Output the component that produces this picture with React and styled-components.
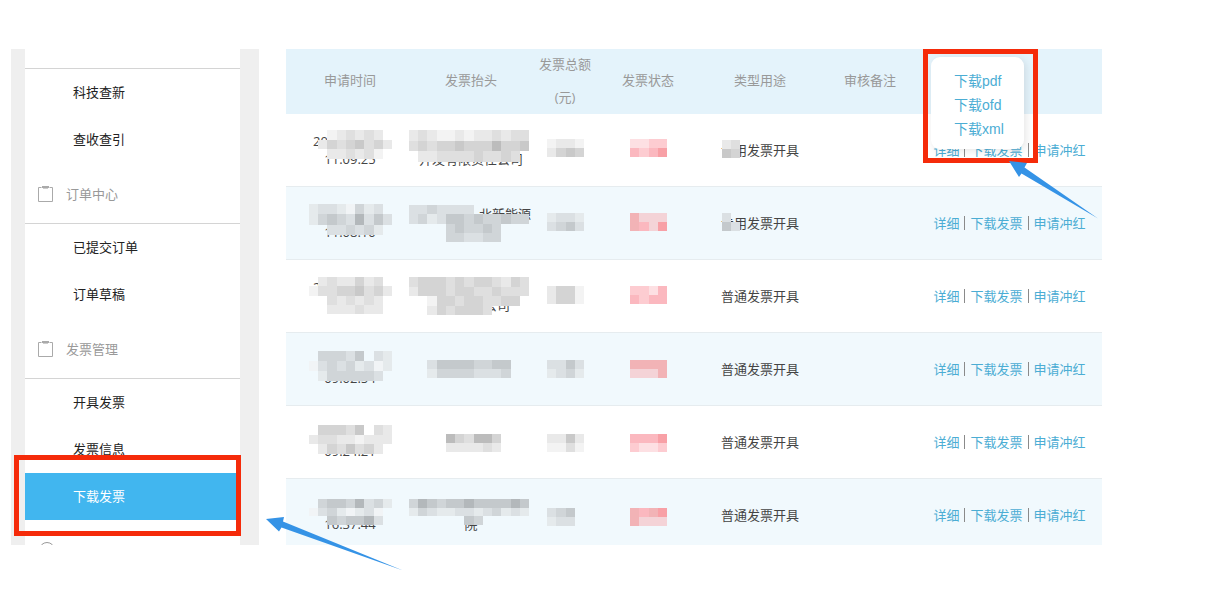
import React from 'react'
import styled, { createGlobalStyle } from 'styled-components'

const GlobalStyle = createGlobalStyle`
  body {
    margin: 0;
    background: #fff;
    font-family: "Open Sans", "Noto Sans CJK SC", sans-serif;
    font-size: 13px;
    color: #444;
  }
  * {
    box-sizing: border-box;
  }
`

const Page = styled.div`
  height: 100vh;
  padding: 49px 103px 44px 11px;
`

const Screen = styled.div`
  position: relative;
  display: flex;
  gap: 27px;
  height: 100%;
`

const Sidebar = styled.nav`
  flex: none;
  width: 248px;
  padding: 0 19px 0 14px;
  background: #efefef;
  overflow: hidden;
`

const Menu = styled.div`
  min-height: 100%;
  background: #fff;
`

const MenuEdge = styled.div`
  height: 20px;
  border-bottom: 1px solid #d4d4d4;
`

const Group = styled.h3`
  display: flex;
  align-items: center;
  gap: 12px;
  height: 61px;
  margin: 0;
  padding-left: 13px;
  border-bottom: 1px solid #d4d4d4;
  font-size: 13px;
  font-weight: normal;
  color: #999;
`

const MenuItem = styled.a`
  display: block;
  height: 47px;
  margin-right: 3px;
  padding-left: 48px;
  line-height: 46px;
  color: ${p => p.$active ? '#fff' : '#222'};
  background: ${p => p.$active ? '#41b6ef' : 'none'};
  text-decoration: none;
`

const Content = styled.main`
  flex: 1;
  min-width: 0;
  overflow: hidden;
`

const Table = styled.table`
  width: 100%;
  margin-top: -2px;
  table-layout: fixed;
  border-collapse: separate;
  border-spacing: 0;
`

const Th = styled.th`
  width: ${p => p.$width}px;
  height: 67px;
  padding: 0;
  background: #e4f3fb;
  font-weight: normal;
  line-height: 33px;
  color: #999;
`

const Row = styled.tr`
  background: ${p => p.$tinted ? '#f1f9fd' : '#fff'};
`

const Td = styled.td`
  position: relative;
  height: 73px;
  padding: 0;
  border-bottom: 1px solid #e6ecef;
  line-height: 18px;
  text-align: center;
  white-space: pre;
`

const Line = styled.div`
  width: ${p => p.$date ? '74px' : 'auto'};
  height: 18px;
  margin: 0 auto;
  text-align: ${p => p.$date ? 'left' : 'center'};
`

const MosaicSvg = styled.svg`
  position: absolute;
  top: ${p => p.$top}px;
  left: calc(50% - ${p => p.$shift}px);
`

const Actions = styled.div`
  display: flex;
  align-items: center;
  justify-content: center;
  padding-left: 3px;
`

const Action = styled.a`
  color: #4badd4;
  text-decoration: none;
`

const Divider = styled.span`
  width: 1px;
  height: 14px;
  margin: 0 5px;
  background: #8a8a8a;
`

const Popup = styled.div`
  position: absolute;
  top: -57px;
  left: 17px;
  width: 93px;
  height: 92px;
  padding: 12px 0 0 23px;
  border-radius: 9px;
  background: #fff;
  box-shadow: 2px 2px 8px rgba(0, 0, 0, 0.1);
  font-family: "Liberation Sans", "Noto Sans CJK SC", sans-serif;
  font-size: 14px;
  line-height: 24px;
  text-align: left;
`

const PopupLink = styled(Action)`
  display: block;
`

const Frame = styled.div`
  position: absolute;
  border: 5px solid #f52b0a;
`

const MenuFrame = styled(Frame)`
  top: 406px;
  left: 3px;
  width: 227px;
  height: 81px;
`

const PopupFrame = styled(Frame)`
  top: -65px;
  left: 9px;
  width: 115px;
  height: 114px;
`

const MenuArrow = styled.svg`
  position: absolute;
  top: 468px;
  left: 255px;
`

const PopupArrow = styled.svg`
  position: absolute;
  z-index: 1;
  top: 47px;
  left: 95px;
`

const greys = {
  a: '#f3f3f3', b: '#e9e9e9', c: '#dfdfdf', d: '#d4d4d4', e: '#c9c9c9', f: '#bcbcbc',
  n: '#f1f4f6', o: '#e5eaec', p: '#dbe0e3', q: '#d0d5d8', r: '#c4c9cc', s: '#b3b8bb',
  u: '#fde0e3', v: '#fdccd1', w: '#fbb8bf', x: '#f8a0a6', y: '#f2b3b6', z: '#f4d3d7'
}

// one letter per square, a dot leaves it empty
const Mosaic = ({ cells, top, shift, height }) => {
  const cols = cells[0].length
  const width = Math.round(cols * 9.2)
  return <MosaicSvg
    width={width}
    height={height || Math.round(cells.length * 9.2)}
    viewBox={`0 0 ${cols} ${cells.length}`}
    preserveAspectRatio='none'
    shapeRendering='crispEdges'
    $top={top}
    $shift={shift || Math.floor(width / 2)}
    aria-hidden='true'
  >
    {cells.map((line, y) => line.split('').map((c, x) => (
      greys[c] && <rect key={x + '-' + y} x={x} y={y} width='1' height='1' fill={greys[c]} />
    )))}
  </MosaicSvg>
}

const rows = [
  {
    date: '20', time: '11:09:25', title: ['', '开发有限责任公司'], type: '专用发票开具',
    dateTop: 16, dateHeight: 29, dateCells: ['..abcbcb.', '.bdcdecdb', '..bbcbca.'],
    titleTop: 16, titleHeight: 32, titleCells: ['bcbaababbcbcc', 'cdcddedddfdde', '.bbccccdccdc.'],
    top: 25, amount: ['abba', 'bded'], status: ['uuvv', 'wvwx'],
    typeTop: 26, typeCells: ['bc', 'ed']
  },
  {
    date: '', time: '11:08:10', title: ['　　　　　北新能源', ''], type: '专用发票开具',
    dateTop: 17, dateHeight: 31, dateCells: ['opponqop.', 'oqrqpsprp', '..ppqpqo.'],
    titleTop: 18, titleCells: ['ppqpppp......', 'pqoprrqrqqrqq', '....qrqqrq...', '....qqppqq...'],
    top: 26, amount: ['oppo', 'pqrp'], status: ['yzzz', 'ywzx'],
    typeTop: 26, typeCells: ['p.', 'rp']
  },
  {
    date: '2', time: '', title: ['', '　　有限公司'], type: '普通发票开具',
    dateTop: 17, dateCells: ['.bcbbdbc.', 'accddecdb', '..cbcbcb.', '..bbbcbb.'],
    titleTop: 17, titleCells: ['cdddcdcddcbdc', 'bdddcddccdccc', '..addcddccdd.', '..bdcdddc....'],
    titleHeight: 38,
    top: 26, amount: ['bdda', 'bdda'], status: ['vvuw', 'wvww']
  },
  {
    date: '', time: '09:02:54', title: ['', ''], type: '普通发票开具',
    dateTop: 18, dateHeight: 30, dateCells: ['.qqqpr.po', 'npqpqopno', '.oqqqqqp.'],
    titleTop: 27, titleCells: ['..prrrrqqrr..', '..oqqqqpppq..'],
    top: 27, amount: ['pprp', 'opqo'], status: ['yyyy', 'zzzy']
  },
  {
    date: '', time: '09:24:21', title: ['', ''], type: '普通发票开具',
    dateTop: 19, dateHeight: 29, dateCells: ['.dddce.cb', 'bccbbabbb', '.bdcecdb.'],
    titleTop: 28, titleCells: ['....fdcffd...', '....bbbbcb...'],
    top: 28, amount: ['bbeb', 'aaca'], status: ['wwwx', 'vuuv']
  },
  {
    date: '', time: '16:37:44', title: ['', '院'], type: '普通发票开具',
    dateTop: 20, dateHeight: 26, dateCells: ['.qrrqspqo', 'npqonopn.', '..rqrrsp.'],
    titleTop: 20, titleHeight: 26, titleCells: ['qsrqrrsrrrrsr', 'oqpooppopqopo', '......rq.....'],
    top: 29, amount: ['pqr.', 'opp.'], status: ['ywyx', 'yzzz']
  }
]

const Clipboard = () => (
  <svg width='16' height='17' viewBox='0 0 16 17' fill='none' stroke='#aaa' aria-hidden='true'>
    <path d='M3.5 2.5H0.5V16.5H14.5V2.5H11.5' />
    <path d='M4 2H11' strokeWidth='2' />
    <path d='M5 3.5H10' stroke='#ccc' />
  </svg>
)

const Circle = () => (
  <svg width='18' height='18' viewBox='0 0 18 18' fill='none' stroke='#999' aria-hidden='true'>
    <circle cx='9' cy='9' r='7.5' />
  </svg>
)

const App = () => {
  return <>
    <GlobalStyle />
    <Page>
      <Screen>
        <Sidebar>
          <Menu>
            <MenuEdge />
            <MenuItem href='#novelty'>科技查新</MenuItem>
            <MenuItem href='#citation'>查收查引</MenuItem>
            <Group><Clipboard />订单中心</Group>
            <MenuItem href='#submitted'>已提交订单</MenuItem>
            <MenuItem href='#drafts'>订单草稿</MenuItem>
            <Group><Clipboard />发票管理</Group>
            <MenuItem href='#issue'>开具发票</MenuItem>
            <MenuItem href='#info'>发票信息</MenuItem>
            <MenuItem href='#download' $active>下载发票</MenuItem>
            <Group><Circle /></Group>
          </Menu>
        </Sidebar>
        <Content>
          <Table>
            <thead>
              <tr>
                <Th $width={128}>申请时间</Th>
                <Th $width={114}>发票抬头</Th>
                <Th $width={74}>发票总额<br />(元)</Th>
                <Th $width={92}>发票状态</Th>
                <Th $width={132}>类型用途</Th>
                <Th $width={88}>审核备注</Th>
                <Th $width={188} />
              </tr>
            </thead>
            <tbody>
              {rows.map((row, i) => (
                <Row key={i} $tinted={i % 2 === 1}>
                  <Td>
                    <Line $date>{row.date}</Line>
                    <Line>{row.time}</Line>
                    <Mosaic cells={row.dateCells} top={row.dateTop} height={row.dateHeight} />
                  </Td>
                  <Td>
                    <Line>{row.title[0]}</Line>
                    <Line>{row.title[1]}</Line>
                    <Mosaic cells={row.titleCells} top={row.titleTop} height={row.titleHeight} shift={62} />
                  </Td>
                  <Td><Mosaic cells={row.amount} top={row.top} /></Td>
                  <Td><Mosaic cells={row.status} top={row.top} /></Td>
                  <Td>
                    {row.type}
                    {row.typeCells && <Mosaic cells={row.typeCells} top={row.typeTop} shift={38} />}
                  </Td>
                  <Td />
                  <Td>
                    <Actions>
                      <Action href='#detail'>详细</Action>
                      <Divider />
                      <Action href='#download'>下载发票</Action>
                      <Divider />
                      <Action href='#reverse'>申请冲红</Action>
                    </Actions>
                    {i === 0 && <>
                      <Popup>
                        <PopupLink href='#pdf'>下载pdf</PopupLink>
                        <PopupLink href='#ofd'>下载ofd</PopupLink>
                        <PopupLink href='#xml'>下载xml</PopupLink>
                      </Popup>
                      <PopupFrame />
                      <PopupArrow width='90' height='58' viewBox='0 0 90 58' aria-hidden='true'>
                        <path d='M0 0L18 2L15.5 6.5L89 57.5L12.5 12.5L10 16Z' fill='#3593e6' />
                      </PopupArrow>
                    </>}
                  </Td>
                </Row>
              ))}
            </tbody>
          </Table>
        </Content>
        <MenuFrame />
        <MenuArrow width='138' height='54' viewBox='0 0 138 54' aria-hidden='true'>
          <path d='M0 2L18 0L17 4.5L137 53.5L15.5 10.5L13 14.5Z' fill='#3593e6' />
        </MenuArrow>
      </Screen>
    </Page>
  </>
}

export default App
